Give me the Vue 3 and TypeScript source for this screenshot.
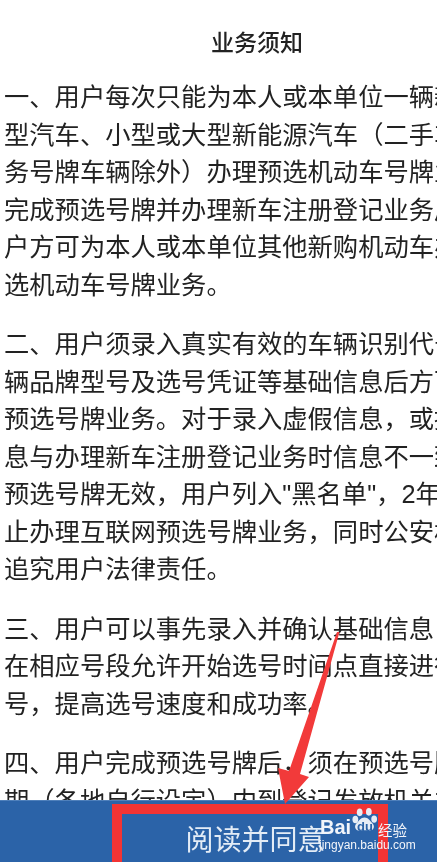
<script setup lang="ts">
const paragraphs: string[][] = [
  ['一、用户每次只能为本人或本单位一辆新', '型汽车、小型或大型新能源汽车（二手车', '务号牌车辆除外）办理预选机动车号牌业', '完成预选号牌并办理新车注册登记业务后', '户方可为本人或本单位其他新购机动车办', '选机动车号牌业务。'],
  ['二、用户须录入真实有效的车辆识别代号', '辆品牌型号及选号凭证等基础信息后方可', '预选号牌业务。对于录入虚假信息，或提', '息与办理新车注册登记业务时信息不一致', '预选号牌无效，用户列入"黑名单"，2年内', '止办理互联网预选号牌业务，同时公安机', '追究用户法律责任。'],
  ['三、用户可以事先录入并确认基础信息，', '在相应号段允许开始选号时间点直接进行', '号，提高选号速度和成功率。'],
  ['四、用户完成预选号牌后，须在预选号牌', '期（各地自行设定）内到登记发放机关办']
]
</script>

<template>
  <div class="page">
    <main class="content">
      <h1 class="title">业务须知</h1>
      <p v-for="(lines, i) in paragraphs" :key="i" class="para">
        <span v-for="(line, j) in lines" :key="j" class="line">{{ line }}</span>
      </p>
    </main>
    <footer class="bar">
      <span class="bar-label">阅读并同意</span>
    </footer>
    <div class="red-box"></div>
    <svg class="arrow" viewBox="0 0 437 862" aria-hidden="true">
      <path d="M341 632 L339.500 632 L300 774 L309 777 L285 804 L278 768 L289 771 L337 632 Z" fill="#f23a3a" />
    </svg>
    <div class="mark">
      <svg class="paw" viewBox="0 0 28 28" aria-hidden="true">
        <ellipse cx="4.500" cy="13" rx="3" ry="3.800" />
        <ellipse cx="9" cy="5.500" rx="3" ry="4" />
        <ellipse cx="18.500" cy="5" rx="3" ry="4" />
        <ellipse cx="24" cy="12.500" rx="3" ry="3.800" />
        <path d="M14 11c4 0 5 3 8 5.500 3.500 3 1.500 8.500-3.500 8-3-.4-6-.4-9 0-5 .5-7-5-3.500-8C9 14 10 11 14 11z" />
      </svg>
      <span class="du">du</span>
      <span class="bai">Bai</span>
      <span class="cn">经验</span>
      <span class="url">jingyan.baidu.com</span>
    </div>
  </div>
</template>

<style scoped>
.page {
  position: relative;
  width: 437px;
  height: 862px;
  overflow: hidden;
  background: #fff;
  display: flex;
  flex-direction: column;
  font-family: "Noto Sans CJK SC", "Noto Sans", sans-serif;
}
.content {
  flex: 1;
  min-height: 0;
  overflow: hidden;
  padding: 23px 0 0 4px;
  color: #222;
  filter: blur(0.45px);
}
.title {
  margin: 0 0 19px;
  padding-left: 73px;
  text-align: center;
  font-size: 23px;
  line-height: 37px;
  font-weight: 500;
}
.para {
  margin: 0 0 22px;
  font-family: "Liberation Sans", "Noto Sans CJK SC", sans-serif;
  font-size: 25.3px;
  line-height: 37.5px;
  white-space: nowrap;
}
.line {
  display: block;
  height: 37.5px;
}
.bar {
  height: 62px;
  flex: none;
  background: #2b63a8;
  border-top: 1px solid #4f80bb;
  box-sizing: border-box;
  display: flex;
  align-items: center;
  justify-content: center;
}
.bar-label {
  margin-left: 74px;
  margin-top: 13px;
  font-size: 28px;
  line-height: 40px;
  color: #e3ecf6;
  filter: blur(0.4px);
}
.red-box {
  position: absolute;
  left: 112px;
  top: 804px;
  width: 276px;
  height: 70px;
  box-sizing: border-box;
  border: 10px solid #f23434;
}
.arrow {
  position: absolute;
  inset: 0;
  width: 437px;
  height: 862px;
}
.mark {
  position: absolute;
  left: 320px;
  top: 806px;
  width: 117px;
  height: 56px;
  color: #f2f5fa;
  filter: blur(0.35px);
}
.paw {
  position: absolute;
  left: 31px;
  top: 1px;
  width: 27px;
  height: 27px;
  fill: #e6edf6;
}
.du {
  position: absolute;
  left: 37px;
  top: 14px;
  font: 700 13px/14px "Liberation Sans", sans-serif;
  color: #2b63a8;
}
.bai {
  position: absolute;
  left: 0;
  top: 10px;
  font: 700 20px/22px "Liberation Sans", sans-serif;
}
.cn {
  position: absolute;
  left: 58px;
  top: 13px;
  font-size: 14.5px;
  line-height: 22px;
}
.url {
  position: absolute;
  left: -1px;
  top: 31px;
  font: 400 12px/16px "Liberation Sans", sans-serif;
}
</style>
